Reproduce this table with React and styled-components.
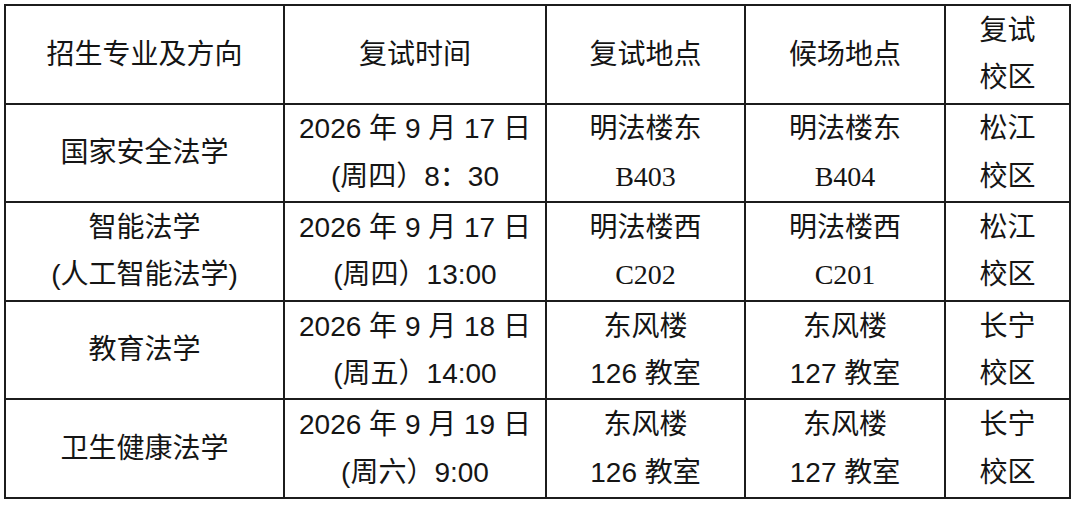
import React from "react";
import styled, { createGlobalStyle } from "styled-components";

const GlobalStyle = createGlobalStyle`
  html, body {
    margin: 0;
    padding: 0;
    background: #ffffff;
  }
  body {
    padding: 4px 0 0 4px;
    font-family: "Liberation Sans", "Noto Sans CJK SC", sans-serif;
    color: #151515;
  }
`;

const headers = [["招生专业及方向"], ["复试时间"], ["复试地点"], ["候场地点"], ["复试", "校区"]];

const rows = [
  [
    ["国家安全法学"],
    ["2026 年 9 月 17 日", "(周四）8：30"],
    ["明法楼东", { serif: "B403" }],
    ["明法楼东", { serif: "B404" }],
    ["松江", "校区"],
  ],
  [
    ["智能法学", "(人工智能法学)"],
    ["2026 年 9 月 17 日", "(周四）13:00"],
    ["明法楼西", { serif: "C202" }],
    ["明法楼西", { serif: "C201" }],
    ["松江", "校区"],
  ],
  [
    ["教育法学"],
    ["2026 年 9 月 18 日", "(周五）14:00"],
    ["东风楼", "126 教室"],
    ["东风楼", "127 教室"],
    ["长宁", "校区"],
  ],
  [
    ["卫生健康法学"],
    ["2026 年 9 月 19 日", "(周六）9:00"],
    ["东风楼", "126 教室"],
    ["东风楼", "127 教室"],
    ["长宁", "校区"],
  ],
];

const widths = [279, 262, 199, 200, 125];

function renderLines(lines) {
  return lines.map((line, i) =>
    typeof line === "string" ? (
      <Line key={i}>{line}</Line>
    ) : (
      <Line key={i} serif>
        {line.serif}
      </Line>
    )
  );
}

export default function App() {
  return (
    <>
      <GlobalStyle />
      <Table>
        <colgroup>
          {widths.map((w, i) => (
            <col key={i} style={{ width: w }} />
          ))}
        </colgroup>
        <tbody>
          <Row>
            {headers.map((h, i) => (
              <Cell key={i}>{renderLines(h)}</Cell>
            ))}
          </Row>
          {rows.map((row, r) => (
            <Row key={r}>
              {row.map((cell, c) => (
                <Cell key={c}>{renderLines(cell)}</Cell>
              ))}
            </Row>
          ))}
        </tbody>
      </Table>
    </>
  );
}

const Table = styled.table`
  border-collapse: collapse;
  table-layout: fixed;
  width: 1066px;
  border: 2px solid #1c1c1c;
`;

const Row = styled.tr`
  height: 98.6px;
`;

const Cell = styled.td`
  border: 2px solid #1c1c1c;
  padding: 0;
  text-align: center;
  vertical-align: middle;
  font-size: 28px;
  line-height: 47.5px;
`;

const Line = styled.div`
  white-space: nowrap;
  font-family: ${(p) =>
    p.serif
      ? `"Liberation Serif", "Noto Sans CJK SC", serif`
      : `"Liberation Sans", "Noto Sans CJK SC", sans-serif`};
`;
